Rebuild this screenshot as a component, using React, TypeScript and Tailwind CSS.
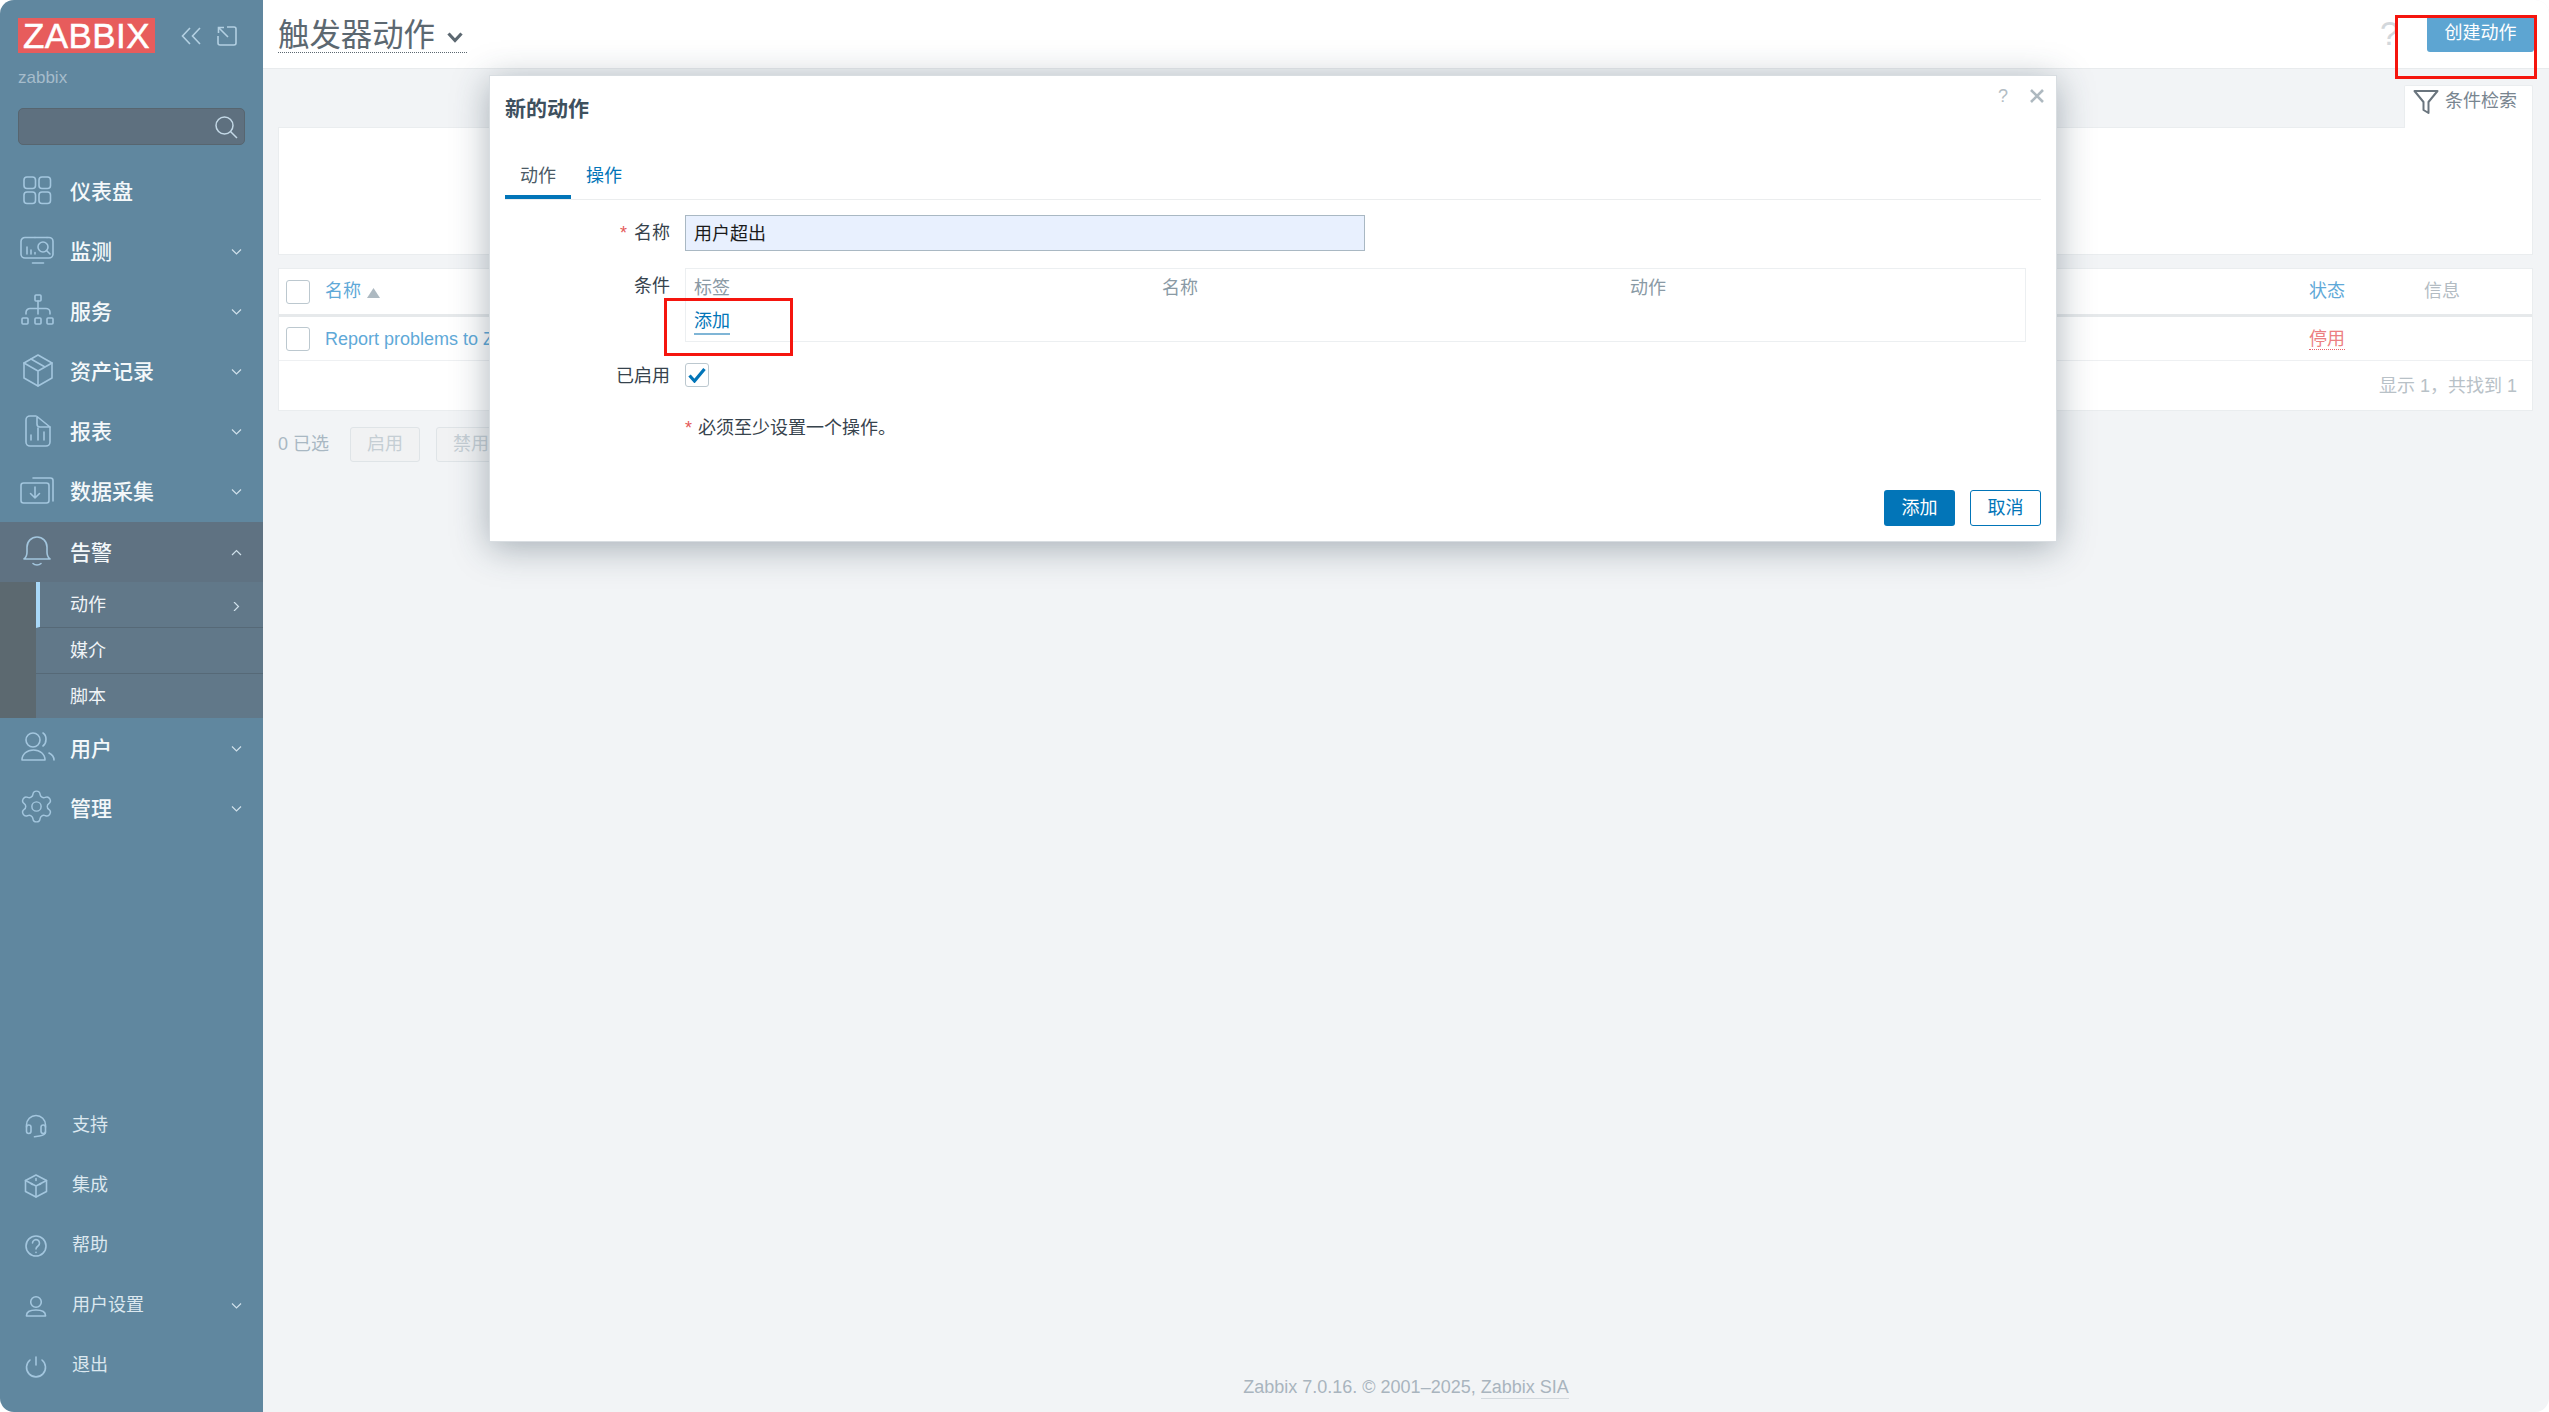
import React from "react";
import { Settings } from "lucide-react";

const FONT = "font-[family-name:'Liberation_Sans','Noto_Sans_CJK_SC',sans-serif]";

type IconProps = { children: React.ReactNode; className?: string; size?: number };

function Ico({ children, className = "", size = 36 }: IconProps) {
  return (
    <svg
      width={size}
      height={size}
      viewBox={`0 0 ${size} ${size}`}
      fill="none"
      stroke="#a3c6de"
      strokeWidth="1.6"
      strokeLinecap="round"
      strokeLinejoin="round"
      className={"shrink-0 " + className}
    >
      {children}
    </svg>
  );
}

const icons: Record<string, React.ReactNode> = {
  dashboard: (
    <>
      <rect x="5" y="4" width="11.5" height="11.5" rx="3" />
      <rect x="20" y="4" width="11.5" height="11.5" rx="3" />
      <rect x="5" y="19" width="11.5" height="11.5" rx="3" />
      <rect x="20" y="19" width="11.5" height="11.5" rx="3" />
    </>
  ),
  monitor: (
    <>
      <path d="M16 4.500H6a4 4 0 0 0-4 4V21a4 4 0 0 0 4 4h24a4 4 0 0 0 4-4V8.500a4 4 0 0 0-4-4h-2" />
      <path d="M16 4.500h12" />
      <path d="M13.500 30h11" />
      <path d="M8 14v7M12 17v4M16 19.500V21" />
      <circle cx="24" cy="14" r="5" />
      <path d="M27.500 17.500 31 21" />
    </>
  ),
  service: (
    <>
      <rect x="16" y="2" width="6" height="6" rx="1" />
      <rect x="3" y="25" width="6" height="6" rx="1" />
      <rect x="16" y="25" width="6" height="6" rx="1" />
      <rect x="28" y="25" width="6" height="6" rx="1" />
      <path d="M19 8v13M7 21v-1.500a4 4 0 0 1 4-4h16a4 4 0 0 1 4 4V21" />
    </>
  ),
  box: (
    <>
      <path d="M19 2 33 10v15l-14 8-14-8V10z" />
      <path d="M5 10l14 8 14-8M19 18v15M12 6l14 8" />
    </>
  ),
  report: (
    <>
      <path d="M17 3H11a4 4 0 0 0-4 4v22a4 4 0 0 0 4 4h16a4 4 0 0 0 4-4V14" />
      <path d="M18 3.500V11a3 3 0 0 0 3 3h10z" />
      <path d="M12 22v5M19 15v12M25 19v8" />
    </>
  ),
  collect: (
    <>
      <rect x="2" y="10" width="28" height="20" rx="2.500" />
      <path d="M14 5h17.500A2.500 2.500 0 0 1 34 7.500V28" />
      <path d="M16 14v11M11.500 20.500 16 25l4.500-4.500" />
    </>
  ),
  bell: (
    <>
      <path d="M5 25c2-1.500 3-3 3-7v-5a10 10 0 0 1 20 0v5c0 4 1 5.500 3 7z" />
      <path d="M14 29.500c2 2 6 2 8 0" />
    </>
  ),
  users: (
    <>
      <circle cx="14" cy="10" r="7" />
      <path d="M3 30c0-6 5-10 11.500-10S26 24 26 30z" />
      <path d="M24 3c4 2.500 4 10 0 13M30 23c3 1.500 5 4 5 7" />
    </>
  ),
  headset: (
    <>
      <path d="M7.500 20v-2a9.500 9.500 0 0 1 19 0v2" />
      <rect x="7.500" y="18" width="4.500" height="8.500" rx="2.200" />
      <rect x="22" y="18" width="4.500" height="8.500" rx="2.200" />
      <path d="M26.500 25c0 3-3 3.500-6 4l-5 .8" />
    </>
  ),
  cube: (
    <>
      <path d="M17 8l10.500 5.500v11L17 30 6.500 24.500v-11z" />
      <path d="M6.500 13.500 17 19l10.500-5.500M17 19v11" />
      <path d="M17 11.500v2M12 16.500l1.500 1M20.500 17.500l1.500-1" />
    </>
  ),
  help: (
    <>
      <circle cx="17" cy="19" r="10" />
      <path d="M13.500 16a3.500 3.500 0 1 1 5.500 3c-1.300.9-2 1.500-2 3" />
      <path d="M17 25.200v.2" />
    </>
  ),
  user: (
    <>
      <circle cx="17" cy="15" r="5.300" />
      <path d="M7.500 29v-.5c0-3.500 4-5.500 9.500-5.500s9.500 2 9.500 5.500v.5z" />
    </>
  ),
  power: (
    <>
      <path d="M11 13a9.500 9.500 0 1 0 12 0" />
      <path d="M17 10v8" />
    </>
  ),
};

function Chevron({ dir = "down" }: { dir?: "down" | "up" | "right" }) {
  const d = dir === "down" ? "M1 1.500 5.500 6 10 1.500" : dir === "up" ? "M1 6 5.500 1.500 10 6" : "M3 0l4.500 4.500L3 9";
  return (
    <svg width="11" height="9" viewBox="0 0 11 9" fill="none" stroke="#cfe0ea" strokeWidth="1.2" className="mt-[3px] shrink-0">
      <path d={d} />
    </svg>
  );
}

function MainItem({ icon, label, arrow, custom }: { icon?: string; label: string; arrow?: "down" | "up"; custom?: React.ReactNode }) {
  return (
    <div className="flex h-[60px] items-center pl-[19px] pr-[21px]">
      <div className="mr-[15px] flex w-[36px] items-center justify-center">
        {custom ?? <Ico>{icons[icon as string]}</Ico>}
      </div>
      <span className="flex-1 text-[21px] font-medium leading-none text-[#f4f8fa]">{label}</span>
      {arrow && <Chevron dir={arrow} />}
    </div>
  );
}

function BottomItem({ icon, label, arrow }: { icon: string; label: string; arrow?: boolean }) {
  return (
    <div className="flex h-[60px] items-center pl-[19px] pr-[21px]">
      <div className="mr-[17px] w-[36px]">
        <Ico>{icons[icon]}</Ico>
      </div>
      <span className="flex-1 text-[18px] leading-none text-[#dce8ef]">{label}</span>
      {arrow && <Chevron />}
    </div>
  );
}

function SubItem({ label, active, last }: { label: string; active?: boolean; last?: boolean }) {
  return (
    <div
      className={
        "flex items-center pr-[21px] " +
        (last ? "h-[44px] pt-px " : "h-[46px] border-b border-[#566977] ") +
        (active ? "border-l-4 border-l-[#a8d8f8] pl-[30px]" : "pl-[34px]")
      }
    >
      <span className="flex-1 text-[18px] leading-none text-[#f0f4f7]">{label}</span>
      {active && <Chevron dir="right" />}
    </div>
  );
}

function Sidebar() {
  return (
    <aside className="flex h-full w-[263px] shrink-0 flex-col bg-[#60879f]">
      <div className="px-[18px] pt-[18px]">
        <div className="flex items-center">
          <div className="flex h-[35px] w-[137px] items-center justify-center bg-[#e75c5c] text-[35px] leading-none tracking-[0.4px] text-white [-webkit-text-stroke:0.5px_white]">
            ZABBIX
          </div>
          <svg width="20" height="18" viewBox="0 0 20 18" fill="none" stroke="#b3d0e2" strokeWidth="1.6" className="ml-[26px]">
            <path d="M9 1 1.500 9 9 17M19 1l-7.500 8 7.500 8" />
          </svg>
          <svg width="20" height="20" viewBox="0 0 20 20" fill="none" stroke="#b3d0e2" strokeWidth="1.6" className="ml-[16px]">
            <path d="M10 1h7a2 2 0 0 1 2 2v14a2 2 0 0 1-2 2H3a2 2 0 0 1-2-2v-7" />
            <path d="M1.500 7V1.500H7M1.500 1.500 11 11" />
          </svg>
        </div>
        <div className="mt-[15px] text-[17px] leading-[20px] text-[#a6bccb]">zabbix</div>
        <div className="mt-[20px] flex h-[37px] items-center justify-end rounded-[5px] border border-[#57656f] bg-[#5e707f] pr-[6px]">
          <svg width="24" height="24" viewBox="0 0 24 24" fill="none" stroke="#c3d8e6" strokeWidth="1.500">
            <circle cx="10.500" cy="10.500" r="8.500" />
            <path d="M16.500 16.500 23 23" />
          </svg>
        </div>
      </div>
      <nav className="mt-[16px] flex flex-col">
        <MainItem icon="dashboard" label="仪表盘" />
        <MainItem icon="monitor" label="监测" arrow="down" />
        <MainItem icon="service" label="服务" arrow="down" />
        <MainItem icon="box" label="资产记录" arrow="down" />
        <MainItem icon="report" label="报表" arrow="down" />
        <MainItem icon="collect" label="数据采集" arrow="down" />
        <div className="mt-px bg-[#5f7282]">
          <MainItem icon="bell" label="告警" arrow="up" />
          <div className="flex bg-[#5c6970]">
            <div className="w-[36px] shrink-0" />
            <div className="flex-1 bg-[#617889]">
              <SubItem label="动作" active />
              <SubItem label="媒介" />
              <SubItem label="脚本" last />
            </div>
          </div>
        </div>
        <MainItem icon="users" label="用户" arrow="down" />
        <MainItem
          label="管理"
          arrow="down"
          custom={<Settings size={37} strokeWidth={0.95} color="#a3c6de" className="-mt-[4px] -ml-[1px]" />}
        />
      </nav>
      <div className="mt-auto mb-[17px] flex flex-col">
        <BottomItem icon="headset" label="支持" />
        <BottomItem icon="cube" label="集成" />
        <BottomItem icon="help" label="帮助" />
        <BottomItem icon="user" label="用户设置" arrow />
        <BottomItem icon="power" label="退出" />
      </div>
    </aside>
  );
}

function Checkbox({ checked }: { checked?: boolean }) {
  return (
    <div className="flex h-[24px] w-[24px] shrink-0 items-center justify-center rounded-[3px] border border-[#bcc8cf] bg-white">
      {checked && (
        <svg width="18" height="16" viewBox="0 0 18 16" fill="none" stroke="#0275b8" strokeWidth="3.200">
          <path d="M1.500 8.500 6.500 14 16.500 2" />
        </svg>
      )}
    </div>
  );
}

function Page() {
  return (
    <main className="flex h-full flex-1 flex-col bg-[#f2f4f6]">
      <header className="flex h-[69px] shrink-0 items-start border-b border-[#e8ebed] bg-white pl-[15px] pr-[15px]">
        <div className="mt-[16px] flex h-[37px] w-[189px] items-center border-b border-dotted border-[#5b6770] pt-[3px] text-[31.400px] leading-none text-[#5c6871]">
          <span>触发器动作</span>
          <svg width="16" height="11" viewBox="0 0 16 11" fill="none" stroke="#5c6871" strokeWidth="3.200" className="ml-[12px] mt-[4px]">
            <path d="M1.500 1.500 8 8.500l6.500-7" />
          </svg>
        </div>
        <div className="ml-auto flex items-start">
          <span className="mt-[16px] text-[34px] leading-[34px] text-[#d3d8dc]">?</span>
          <div className="ml-[28px] mt-[17px] flex h-[35px] w-[107px] items-start justify-center rounded-b-[3px] bg-[#5da5d2] pt-[5px] text-[18px] leading-[22px] text-white">
            创建动作
          </div>
        </div>
      </header>

      <section className="flex flex-col pl-[15px] pr-[16px] pt-[16px]">
        <div className="flex justify-end">
          <div className="-mb-px z-10 flex h-[43px] w-[129px] items-start rounded-t-[2px] border border-b-0 border-[#eaedef] bg-white pl-[8px] pt-[3px]">
            <svg width="26" height="26" viewBox="0 0 26 26" fill="none" stroke="#6a757e" strokeWidth="2">
              <path d="M1.500 2h23l-9 11v11l-5-3v-8z" strokeLinejoin="round" />
            </svg>
            <span className="ml-[6px] mt-[1px] text-[18px] leading-[22px] text-[#788590]">条件检索</span>
          </div>
        </div>
        <div className="h-[128px] border border-[#eaedef] bg-white" />

        <div className="mt-[13px] border border-[#eaedef] bg-white">
          <div className="grid h-[48px] grid-cols-[46px_1fr_115px_108px] items-center border-b-[3px] border-[#e6e9eb] text-[18px]">
            <div className="pl-[7px]">
              <Checkbox />
            </div>
            <div className="flex items-center text-[#5fa9d8]">
              名称
              <svg width="13" height="10" viewBox="0 0 13 10" className="ml-[6px] mt-[3px]">
                <path d="M6.500 0 13 10H0z" fill="#adb9c1" />
              </svg>
            </div>
            <div className="text-[#5fa9d8]">状态</div>
            <div className="text-[#b3bcc3]">信息</div>
          </div>
          <div className="grid h-[44px] grid-cols-[46px_1fr_115px_108px] items-center border-b border-[#eef0f2] text-[18px]">
            <div className="pl-[7px]">
              <Checkbox />
            </div>
            <div className="pt-[2px] text-[#5fa9d8]">Report problems to Zabbix administrators</div>
            <div className="pt-[2px]">
              <span className="border-b border-dotted border-[#e8636b] leading-[22px] text-[#ec7f82]">停用</span>
            </div>
            <div />
          </div>
          <div className="flex h-[49px] items-center justify-end pr-[15px] pt-[2px] text-[18px] text-[#b8c1c7]">显示 1，共找到 1</div>
        </div>

        <div className="mt-[16px] flex items-center text-[18px]">
          <span className="mr-[22px] w-[50px] whitespace-nowrap text-[#a9b8c3]">0 已选</span>
          <div className="mr-[16px] flex h-[35px] w-[70px] items-center justify-center rounded-[3px] border border-[#dfe4e7] bg-[#f1f2f3] text-[#c5ced4]">启用</div>
          <div className="flex h-[35px] w-[70px] items-center justify-center rounded-[3px] border border-[#dfe4e7] bg-[#f1f2f3] text-[#c5ced4]">禁用</div>
        </div>
      </section>

      <footer className="mt-auto flex justify-center pb-[13px] text-[18px] leading-[22px] text-[#a9b4be]">
        <span>Zabbix 7.0.16. © 2001–2025,&nbsp;</span>
        <span className="border-b border-[#d3d9de]">Zabbix SIA</span>
      </footer>
    </main>
  );
}

function Dialog() {
  return (
    <div className="absolute left-[489px] top-[75px] flex h-[467px] w-[1568px] flex-col border border-[#d8dde1] bg-white px-[15px] text-[18px] leading-[24px] text-[#37434d] shadow-[0_6px_34px_rgba(40,60,75,0.38)]">
      <div className="flex h-[64px] items-center">
        <span className="mt-px text-[21px] font-bold text-[#3e505e]">新的动作</span>
        <span className="ml-auto -mt-[24px] text-[18px] text-[#b3bdc4]">?</span>
        <svg width="14" height="14" viewBox="0 0 14 14" stroke="#aeb9c0" strokeWidth="2.600" className="ml-[22px] mr-[-3px] -mt-[24px]">
          <path d="M1 1l12 12M13 1 1 13" />
        </svg>
      </div>
      <div className="flex h-[60px] items-end border-b border-[#ebedee]">
        <div className="flex h-[35px] w-[66px] justify-center border-b-4 border-[#0275b8] text-[#4b5a66]">动作</div>
        <div className="flex h-[35px] w-[66px] justify-center text-[#0275b8]">操作</div>
      </div>
      <div className="mt-[15px] grid grid-cols-[165px_1fr] gap-x-[15px]">
        <div className="flex h-[36px] items-center justify-end">
          <span className="mr-[7px] text-[#e45959]">*</span>名称
        </div>
        <div className="flex h-[36px] w-[680px] items-center border border-[#a9b8c3] bg-[#e8f0fe] pl-[8px] pt-[2px] text-[#1a1a1a]">用户超出</div>

        <div className="mt-[17px] pt-[6px] text-right">条件</div>
        <div className="mr-[15px] mt-[17px] h-[74px] border border-[#eceff1] pl-[8px] pt-[7px]">
          <div className="grid grid-cols-[468px_468px_1fr] text-[#8a9aa5]">
            <span>标签</span>
            <span>名称</span>
            <span>动作</span>
          </div>
          <span className="mt-[9px] inline-block border-b-2 border-[#7fb5d6] leading-[24px] text-[#0275b8]">添加</span>
        </div>

        <div className="mt-[21px] flex h-[24px] items-center justify-end pt-px">已启用</div>
        <div className="mt-[21px]">
          <Checkbox checked />
        </div>

        <div />
        <div className="mt-[29px] flex">
          <span className="mr-[6px] text-[#e45959]">*</span>必须至少设置一个操作。
        </div>
      </div>
      <div className="mt-auto flex justify-end gap-[15px] pb-[15px]">
        <div className="flex h-[36px] w-[71px] items-center justify-center rounded-[3px] bg-[#0275b8] text-white">添加</div>
        <div className="flex h-[36px] w-[71px] items-center justify-center rounded-[3px] border border-[#0275b8] text-[#0275b8]">取消</div>
      </div>
    </div>
  );
}

export default function App() {
  return (
    <div className="bg-white">
      <div className={"relative flex h-[1412px] w-[2549px] overflow-hidden rounded-[14px] " + FONT}>
        <Sidebar />
        <Page />
        <Dialog />
        <div className="absolute left-[2395px] top-[15px] h-[64px] w-[142px] border-[3px] border-[#f5150e]" />
        <div className="absolute left-[664px] top-[298px] h-[58px] w-[129px] border-[3px] border-[#f5150e]" />
      </div>
    </div>
  );
}
